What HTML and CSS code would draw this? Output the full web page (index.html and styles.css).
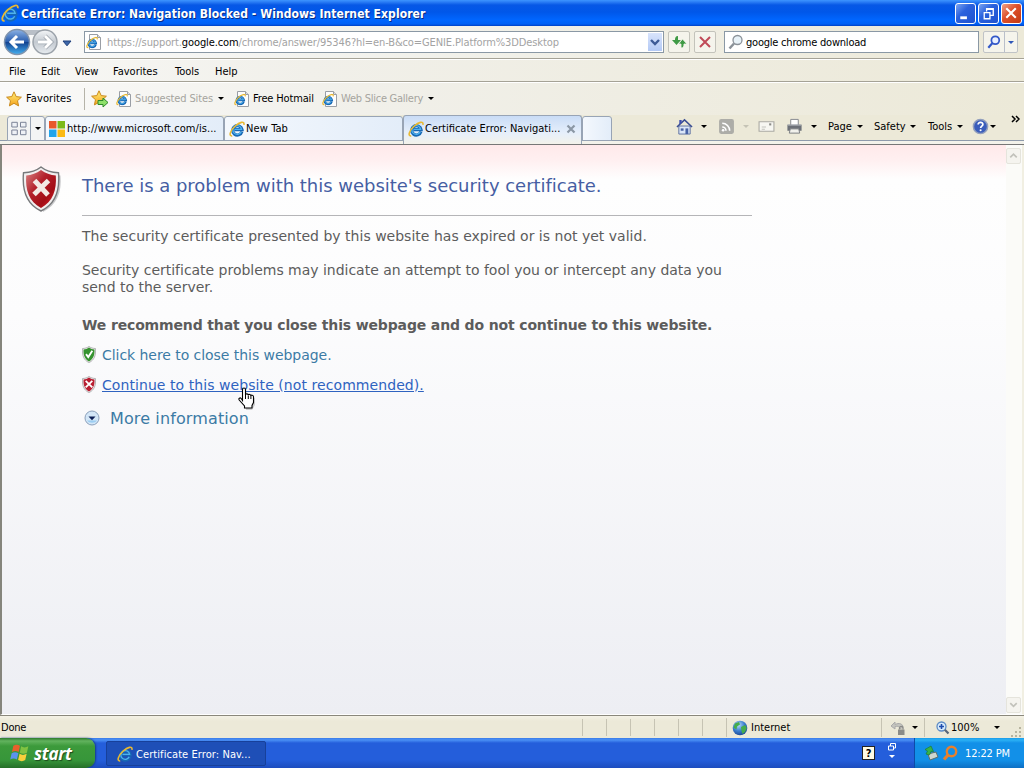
FILE: index.html
```html
<!DOCTYPE html>
<html lang="en">
<head>
    <meta charset="UTF-8">
    <meta name="viewport" content="width=device-width, initial-scale=1.0">
    <title>Certificate Error: Navigation Blocked</title>
    <link rel="stylesheet" href="styles.css">
</head>
<body>
    <!-- shared icons -->
    <svg class="defs" width="0" height="0">
        <defs>
            <linearGradient id="gBlue" x1="0" y1="0" x2="0" y2="1">
                <stop offset="0" stop-color="#8db3e6"/><stop offset=".48" stop-color="#2c5fae"/><stop offset=".5" stop-color="#123f8d"/><stop offset="1" stop-color="#45b1f2"/>
            </linearGradient>
            <linearGradient id="gGray" x1="0" y1="0" x2="0" y2="1">
                <stop offset="0" stop-color="#f4f6f8"/><stop offset=".5" stop-color="#c3c9d0"/><stop offset="1" stop-color="#e8ecf0"/>
            </linearGradient>
            <linearGradient id="gRed" x1="0" y1="0" x2="1" y2="1">
                <stop offset="0" stop-color="#d98484"/><stop offset=".4" stop-color="#b3202a"/><stop offset=".7" stop-color="#a30d15"/><stop offset="1" stop-color="#e0202a"/>
            </linearGradient>
            <linearGradient id="gStar" x1="0" y1="0" x2="0" y2="1">
                <stop offset="0" stop-color="#fff07a"/><stop offset="1" stop-color="#f5a21c"/>
            </linearGradient>
            <radialGradient id="gGlobe" cx=".4" cy=".3" r=".8">
                <stop offset="0" stop-color="#b5dcf8"/><stop offset=".5" stop-color="#3c7fd0"/><stop offset="1" stop-color="#123a86"/>
            </radialGradient>
        </defs>
        <symbol id="ie" viewBox="0 0 16 16">
            <path d="M12.900 10.600A4.700 4.700 0 1 1 13 8.600H5.500" fill="none" stroke="#1768b5" stroke-width="3.200"/>
            <path d="M12.200 10.900A4.400 4.400 0 1 1 12.600 8.300H5.500" fill="none" stroke="#4fb2ee" stroke-width="1.300"/>
            <path d="M3.200 14.900C-.5 15.500 1 9.500 6.200 5C10.300 1.300 15.800-.5 14.900 3.800" fill="none" stroke="#e9b932" stroke-width="1.600"/>
        </symbol>
        <symbol id="page" viewBox="0 0 16 16">
            <path d="M3.500.5h8l3 3v12h-11z" fill="#fdfdfd" stroke="#9a9ea5"/>
            <path d="M11.500.5v3h3" fill="#ddd" stroke="#9a9ea5"/>
            <use href="#ie" x="0" y="2.500" width="12" height="12"/>
        </symbol>
        <symbol id="star" viewBox="0 0 16 16">
            <path d="M8 .8l2.200 4.800 5.200.6-3.900 3.500 1.100 5.200L8 12.300l-4.600 2.600 1.100-5.200L.6 6.200l5.200-.6z" fill="url(#gStar)" stroke="#c98a1e"/>
        </symbol>
        <symbol id="shield" viewBox="0 0 38 46">
            <path d="M19 1C14 5 8 6.500 1.500 6.800 0 24 4 38 19 45 34 38 38 24 36.500 6.800 30 6.500 24 5 19 1z" fill="#f1eeee" stroke="#77797b" stroke-width="1.400"/>
            <path d="M19 4C14.500 7.300 9.500 9 4.200 9.500 3.200 24 7 35.500 19 42 31 35.500 34.800 24 33.800 9.500 28.500 9 23.500 7.300 19 4z"/>
        </symbol>
        <symbol id="lens" viewBox="0 0 16 16">
            <circle cx="9.500" cy="6" r="4.500"/>
            <path d="M6 9.500L1.500 14.500" stroke-width="2.500"/>
        </symbol>
    </svg>

    <div class="window">
        <div class="titlebar">
            <svg class="i18"><use href="#ie"/></svg>
            <span class="title">Certificate Error: Navigation Blocked - Windows Internet Explorer</span>
            <div class="wbtn"><svg viewBox="0 0 20 20"><path d="M4.500 14.500h7" stroke="#fff" stroke-width="3"/></svg></div>
            <div class="wbtn"><svg viewBox="0 0 20 20" fill="none" stroke="#fff"><path d="M8 8V5h7v7h-3M8 5.500h7M5 9h7M5.500 9v6.500h6V9z" stroke-width="1.400"/></svg></div>
            <div class="wbtn close"><svg viewBox="0 0 20 20"><path d="M4.500 4.500l10 10M14.500 4.500l-10 10" stroke="#fff" stroke-width="2.200"/></svg></div>
        </div>

        <div class="navbar">
            <svg class="travel" viewBox="0 0 56 30">
                <path d="M14 3h28v5H14z" fill="#b9bfc7"/>
                <circle cx="42" cy="15" r="12" fill="url(#gGray)" stroke="#9ba2aa" stroke-width="1.500"/>
                <circle cx="14" cy="15" r="12.500" fill="url(#gBlue)" stroke="#7f93ad" stroke-width="1.500"/>
                <path d="M21 15H8.500M14 9l-6 6 6 6" fill="none" stroke="#fff" stroke-width="3"/>
                <path d="M35 15h12.500M42 9l6 6-6 6" fill="none" stroke="#a3aab2" stroke-width="4.500"/>
                <path d="M35 15h12.500M42 9l6 6-6 6" fill="none" stroke="#fff" stroke-width="2.800"/>
            </svg>
            <svg class="recent" viewBox="0 0 10 7"><path d="M1 1h8L5 5.800z" fill="#3c66a8" stroke="#1d3f7c"/></svg>
            <div class="address">
                <svg class="i16"><use href="#page"/></svg>
                <span class="url">https://support.<b>google.com</b>/chrome/answer/95346?hl=en-B&amp;co=GENIE.Platform%3DDesktop</span>
                <div class="drop"><svg viewBox="0 0 14 18"><path d="M3 7l4 4 4-4" fill="none" stroke="#3d5a96" stroke-width="2.400"/></svg></div>
            </div>
            <div class="nbtn"><svg viewBox="0 0 20 20"><path d="M9 4C6.500 4 6 6 6 8H3l4.500 5L12 8H9z" fill="#3f9a45"/><path d="M12 16c2.500 0 3-2 3-4h3l-4.500-5L9.500 12H12z" fill="#3f9a45" stroke="#f5f4ec" stroke-width=".8"/></svg></div>
            <div class="nbtn"><svg viewBox="0 0 20 20" stroke="#c04a58" stroke-width="2"><path d="M5 5l10 10M15 5L5 15"/></svg></div>
            <div class="search">
                <svg class="i16" fill="#e8f2f8" stroke="#8b9299" stroke-width="1.300"><use href="#lens"/></svg>
                <span>google chrome download</span>
            </div>
            <div class="go">
                <svg class="i14" fill="#e9f0ff" stroke="#3358c8" stroke-width="2"><use href="#lens"/></svg>
                <i class="split"></i>
                <i class="arrow blue"></i>
            </div>
        </div>

        <div class="menubar">
            <span>File</span><span>Edit</span><span>View</span><span>Favorites</span><span>Tools</span><span>Help</span>
        </div>

        <div class="favbar">
            <svg class="i16"><use href="#star"/></svg>
            <span class="f1">Favorites</span>
            <i class="sep"></i>
            <svg class="i18" viewBox="0 0 18 18"><use href="#star" width="16" height="16"/><path d="M7 10.500h5V8l5 4.500-5 4.500v-2.500H7z" fill="#8ee06a" stroke="#2f8a2a"/></svg>
            <svg class="i16"><use href="#page"/></svg>
            <span class="dim f2">Suggested Sites</span>
            <i class="arrow"></i>
            <svg class="i16"><use href="#page"/></svg>
            <span class="f3">Free Hotmail</span>
            <svg class="i16"><use href="#page"/></svg>
            <span class="dim f4">Web Slice Gallery</span>
            <i class="arrow"></i>
        </div>

        <div class="tabrow">
            <div class="quick">
                <svg viewBox="0 0 16 14" fill="#eef1f6" stroke="#7c8498"><path d="M.8.800h5.500v4.700H.8zM9.500.800H15v4.700H9.500zM.8 8.500h5.500v4.700H.8zM9.500 8.500H15v4.700H9.500z"/></svg>
                <i class="split"></i>
                <i class="arrow"></i>
            </div>
            <div class="tab first">
                <svg class="i16" viewBox="0 0 16 16"><path d="M0 0h7.500v7.500H0z" fill="#e8582b"/><path d="M8.500 0H16v7.500H8.500z" fill="#7cba19"/><path d="M0 8.500h7.500V16H0z" fill="#22a4ea"/><path d="M8.500 8.500H16V16H8.500z" fill="#fbba15"/></svg>
                <span class="t1">http://www.microsoft.com/is...</span>
            </div>
            <div class="tab">
                <svg class="i16"><use href="#ie"/></svg>
                <span class="t2">New Tab</span>
            </div>
            <div class="tab active">
                <svg class="i16"><use href="#ie"/></svg>
                <span class="t3">Certificate Error: Navigati...</span>
                <svg class="tabx" viewBox="0 0 10 10"><path d="M1.500 1.500l7 7M8.500 1.500l-7 7" stroke="#8b97a5" stroke-width="2.200"/></svg>
            </div>
            <div class="tab new"></div>
            <div class="commands">
                <svg viewBox="0 0 18 18"><path d="M3 8.500h12V17H3z" fill="#dbe6f8" stroke="#5b6f9e"/><path d="M1 9.500L9 2l8 7.500" fill="none" stroke="#3a4d92" stroke-width="1.600"/><path d="M3.500 2H6v3l-2.500 2z" fill="#3d4fb0"/><path d="M10 11h3v6h-3z" fill="#4862a5"/><path d="M5 11h3v2.500H5z" fill="#4862a5"/></svg>
                <i class="arrow"></i>
                <svg class="rss" viewBox="0 0 16 16"><rect x="1" y="1" width="14" height="14" rx="2" fill="#adada8"/><path d="M4 5a7 7 0 0 1 7 7M4 8.500A3.500 3.500 0 0 1 7.500 12" fill="none" stroke="#fff" stroke-width="1.500"/><circle cx="4.800" cy="11.500" r="1.200" fill="#fff"/></svg>
                <i class="arrow pale"></i>
                <svg class="mail" viewBox="0 0 16 16"><path d="M1 3.500h14v9H1z" fill="#f7f7f2" stroke="#aaa9a2"/><path d="M3.500 8.500h4M3.500 10.500h3" stroke="#c4c4bd"/><path d="M10.500 5h2v2h-2z" fill="#8c8c88"/></svg>
                <svg viewBox="0 0 18 18"><path d="M5 1.500h8V8H5z" fill="#fff" stroke="#83868c"/><path d="M1.500 7h15v6.500h-15z" fill="#6c7078"/><path d="M2 7.500h14" stroke="#b7bbc2"/><path d="M4.500 11.500h9l1 4.500h-11z" fill="#f1f1ec" stroke="#777a80"/></svg>
                <i class="arrow"></i>
                <span>Page</span><i class="arrow"></i>
                <span>Safety</span><i class="arrow"></i>
                <span>Tools</span><i class="arrow"></i>
                <svg viewBox="0 0 18 18"><circle cx="9" cy="9" r="7.500" fill="#3a5dbb" stroke="#929fbd" stroke-width="1.600"/><path d="M6.500 7c0-3.300 5.200-3 5 0-.1 1.600-2.400 1.600-2.400 3.600" fill="none" stroke="#fff" stroke-width="1.800"/><circle cx="9.100" cy="13" r="1.100" fill="#fff"/></svg>
                <i class="arrow"></i>
                <svg class="more" viewBox="0 0 9 8"><path d="M1 1l3 3-3 3M5 1l3 3-3 3" fill="none" stroke="#000" stroke-width="1.500"/></svg>
            </div>
        </div>

        <div class="view">
            <div class="page">
                <svg class="bigshield" viewBox="0 0 40 47"><path d="M21 4c6 4 12 5 17.500 5.500C40 26 35 39 21 46z" fill="#c9c9cb"/><g fill="url(#gRed)"><use href="#shield" width="38" height="46"/></g><path d="M12.500 14.500l13.500 14.500M26.500 14.500L12 28.500" stroke="#f3e9e4" stroke-width="5"/></svg>
                <div class="message">
                    <h1>There is a problem with this website's security certificate.</h1>
                    <p class="p1">The security certificate presented by this website has expired or is not yet valid.</p>
                    <p class="p2">Security certificate problems may indicate an attempt to fool you or intercept any data you<br>send to the server.</p>
                    <p class="advice">We recommend that you close this webpage and do not continue to this website.</p>
                    <div class="option">
                        <svg viewBox="0 0 38 46"><g fill="#35922f"><use href="#shield"/></g><path d="M11 22l6 8 11-17" fill="none" stroke="#fff" stroke-width="5"/></svg>
                        <a class="a1">Click here to close this webpage.</a>
                    </div>
                    <div class="option">
                        <svg viewBox="0 0 38 46"><g fill="#b81e31"><use href="#shield"/></g><path d="M10 13l18 18M28 13L10 31" stroke="#fff" stroke-width="5"/></svg>
                        <a class="a2 hover">Continue to this website (not recommended).</a>
                        <svg class="cursor" viewBox="0 0 18 24">
                            <path d="M7 3l3 5 7 3v7l-3 5H8z" fill="#999" opacity=".45"/>
                            <path d="M4.500 13.500V2.500c0-2 3-2 3 0V8c0-1.500 2.800-1.500 2.800.3 0-1.300 2.600-1.200 2.600.6 0-1.200 2.600-1 2.600.8v5.800l-1.500 3v2.500H6.500v-2L1.200 13c-1-1.700.9-2.700 2-1.500z" fill="#fff" stroke="#000" stroke-width="1.100"/>
                            <path d="M7.500 8v4M10.300 8.500V12M12.900 9v3" stroke="#000"/>
                        </svg>
                    </div>
                    <div class="info">
                        <svg viewBox="0 0 16 16"><circle cx="8" cy="8" r="7" fill="#d3e6f7" stroke="#8ba0bb"/><path d="M3 10.500a5.500 4 0 0 0 10 0z" fill="#9ccdf2"/><path d="M4.500 6.500h7L8 10.200z" fill="#0c1e55"/></svg>
                        <a>More information</a>
                    </div>
                </div>
            </div>
            <div class="scrollbar">
                <div class="sbtn"><svg viewBox="0 0 14 14"><path d="M3.500 9L7 5.500 10.500 9" fill="none" stroke="#c2c2bb" stroke-width="1.800"/></svg></div>
                <div class="sbtn"><svg viewBox="0 0 14 14"><path d="M3.500 5.500L7 9l3.500-3.500" fill="none" stroke="#c2c2bb" stroke-width="1.800"/></svg></div>
            </div>
        </div>

        <div class="status">
            <span class="done">Done</span>
            <i></i><i></i><i></i><i></i><i></i><i></i>
            <div class="zone">
                <svg viewBox="0 0 16 16"><circle cx="8" cy="8" r="7.300" fill="url(#gGlobe)"/><path d="M3 3.500l4-1.500 1 2.500-3 2-.5 3-3-2zM9 7l4-2 1.800 3L13 12l-2.500 2-1-3z" fill="#45ad4b"/></svg>
                <span>Internet</span>
            </div>
            <div class="protect">
                <svg viewBox="0 0 18 18"><path d="M2 7l4-4v2.500c4-2 8-1 8 3l-3 1C10 7 9 7 6 7.500V10z" fill="#c4c4be" stroke="#aaa"/><path d="M9 10.500h6.500V16H9z" fill="#8b8b88"/><path d="M10.500 10.500V8.800c0-2 3.500-2 3.500 0v1.700" fill="none" stroke="#8b8b88" stroke-width="1.300"/></svg>
                <i class="arrow"></i>
            </div>
            <div class="zoom">
                <svg viewBox="0 0 14 14"><circle cx="5.500" cy="5.500" r="4.500" fill="#d8ebfb" stroke="#5c8bc5" stroke-width="1.300"/><path d="M3 5.500h5M5.500 3v5" stroke="#1f4dae" stroke-width="1.600"/><path d="M8.800 8.800L12.500 12.500" stroke="#596679" stroke-width="2.200"/></svg>
                <span>100%</span>
                <i class="arrow"></i>
                <svg class="grip" viewBox="0 0 12 12" fill="#b7b49f"><path d="M9 1h2v2H9zM5 5h2v2H5zM9 5h2v2H9zM1 9h2v2H1zM5 9h2v2H5zM9 9h2v2H9z"/></svg>
            </div>
        </div>
    </div>

    <div class="taskbar">
        <div class="start">
            <svg viewBox="0 0 18 18"><path d="M3 2.500q3-2 6 0L7.800 8.200q-3-1.800-6 0z" fill="#e8602c"/><path d="M10 3q3 2 6.500 0l-1.300 5.700q-3 2-6.400 0z" fill="#80c242"/><path d="M1.500 9.200q3-1.800 6 0l-1.300 5.700q-3-1.900-6 0z" fill="#5b93ee"/><path d="M8.600 9.700q3 2 6.400 0l-1.300 5.700q-3 2-6.400 0z" fill="#f8cf3c"/></svg>
            <span>start</span>
        </div>
        <div class="task">
            <svg class="i16"><use href="#ie"/></svg>
            <span>Certificate Error: Nav...</span>
        </div>
        <div class="lang">
            <b>?</b>
            <svg viewBox="0 0 12 18"><path d="M4.500 4V1.500h5V6H7M2.500 4h5v4h-5z" fill="none" stroke="#fff"/><path d="M3 13h6l-3 3z" fill="#fff"/></svg>
        </div>
        <div class="tray">
            <svg viewBox="0 0 16 16"><path d="M5 9l8-2 2 5-8 3z" fill="#cfd6cf" stroke="#5f6f6a"/><path d="M3 9l1.500-3L2 4.500 8 1l2.500 5.500L8 6.300 6.500 10z" fill="#37b24a" stroke="#1b7c35" stroke-width=".7"/></svg>
            <svg viewBox="0 0 16 16"><circle cx="9.500" cy="6.500" r="4.700" fill="none" stroke="#e9802c" stroke-width="2.400"/><path d="M6 10l-4 4.500" stroke="#e9802c" stroke-width="3.200"/></svg>
            <span>12:22 PM</span>
        </div>
    </div>
</body>
</html>
```
FILE: styles.css
```css
* {
    box-sizing: border-box;
}
body {
    margin: 0;
    width: 1024px;
    height: 768px;
    overflow: hidden;
    display: flex;
    flex-direction: column;
    font-family: "DejaVu Sans Condensed", "DejaVu Sans", sans-serif;
    font-stretch: condensed;
    font-size: 11px;
    color: #000;
    white-space: nowrap;
}
svg {
    display: block;
    flex: none;
}
span, i {
    flex: none;
}
.defs {
    position: absolute;
}
.i14 { width: 14px; height: 14px; }
.i16 { width: 16px; height: 16px; }
.i18 { width: 18px; height: 18px; }
.arrow {
    border: 3px solid transparent;
    border-top-color: #000;
    border-bottom: 0;
    width: 6px;
}
.arrow.blue { border-top-color: #2f56b8; }
.arrow.pale { border-top-color: #c5c3b5; }

.window {
    height: 738px;
    display: flex;
    flex-direction: column;
    background: #ece9d8;
}

/* title bar */
.titlebar {
    height: 26px;
    display: flex;
    align-items: center;
    padding: 0 2px 0 1px;
    gap: 3px;
    background: linear-gradient(#3d95ff 0, #2a7df5 2px, #0758e6 5px, #0057e9 12px, #0066ff 20px, #0060f5 24px, #0040c4);
}
.title {
    flex: 1;
    margin: 1px 0 0 -1px;
    color: #fff;
    font-size: 12px;
    font-weight: bold;
    letter-spacing: 0.08px;
    text-shadow: 1px 1px #0a2d83;
}
.wbtn {
    width: 21px;
    height: 21px;
    border: 1px solid #fff;
    border-radius: 3px;
    background: linear-gradient(135deg, #7ba4f2, #2b62dd 40%, #1f52cf);
    margin-right: -1px;
}
.wbtn.close {
    background: linear-gradient(135deg, #f0a288, #dd4f2a 45%, #c23a14);
    margin-right: 0;
}

/* address row */
.navbar {
    height: 33px;
    display: flex;
    align-items: center;
    padding-left: 3px;
    border-bottom: 1px solid #a5a296;
    background: linear-gradient(90deg, #fafafa, #f3f3ef 30%, #ece9d8);
}
.travel { width: 56px; height: 30px; }
.recent { width: 10px; height: 7px; margin: 2px 0 0 3px; }
.address {
    width: 580px;
    height: 22px;
    margin-left: 12px;
    padding-left: 1px;
    display: flex;
    align-items: center;
    border: 1px solid #8a98a5;
    background: #fff;
}
.url {
    flex: 1;
    margin: 1px 0 0 5px;
    color: #a3a3a3;
    letter-spacing: -0.11px;
}
.url b {
    font-weight: normal;
    color: #000;
}
.drop {
    width: 14px;
    height: 18px;
    margin-right: 1px;
    background: linear-gradient(#d8e4fc, #b3c9f5);
}
.nbtn {
    width: 22px;
    height: 22px;
    margin-left: 4px;
    border: 1px solid #c3c3bb;
    border-radius: 2px;
    background: #f5f4ec;
}
.search {
    width: 255px;
    height: 22px;
    margin-left: 8px;
    padding-left: 3px;
    gap: 2px;
    display: flex;
    align-items: center;
    border: 1px solid #8a98a5;
    background: #fff;
}
.search span {
    margin-top: 1px;
    letter-spacing: -0.22px;
}
.go {
    width: 35px;
    height: 22px;
    margin-left: 4px;
    padding-left: 3px;
    display: flex;
    align-items: center;
    border: 1px solid #c0c3c6;
    border-radius: 2px;
    background: #f5f4ec;
}
.split {
    width: 1px;
    height: 100%;
    margin: 0 4px 0 3px;
    background: #b9bfca;
}
.go .split { margin-right: 3px; }

/* menu */
.menubar {
    height: 23px;
    display: grid;
    grid-template-columns: 32px 34px 38px 62px 40px 40px;
    align-items: center;
    padding: 2px 0 0 9px;
    border-top: 1px solid #fff;
    border-bottom: 1px solid #a5a296;
    background: linear-gradient(90deg, #f8f8f6, #f1f0ea 30%, #ece9d8);
}

/* favorites bar */
.favbar {
    height: 33px;
    display: grid;
    grid-template-columns: 20px 58px 7px 25px 19px 83px 16px 19px 69px 19px 87px 10px;
    align-items: center;
    padding: 0 0 1px 6px;
    border-top: 1px solid #fff;
    background: linear-gradient(90deg, #fafaf9, #f1f0ea 35%, #ece9d8);
}
.sep {
    width: 1px;
    height: 22px;
    background: #b5b3a8;
}
.dim { color: #a5a49e; }
.f1 { letter-spacing: 0.1px; margin-top: -1px; }
.f2 { letter-spacing: -0.13px; }
.f3 { letter-spacing: -0.15px; }
.f4 { letter-spacing: -0.25px; }

/* tabs */
.tabrow {
    height: 30px;
    display: flex;
    align-items: flex-start;
    padding-left: 7px;
    background: linear-gradient(#ece9d8 25px, #8e9aab 25px, #8e9aab 26px, #f3f2ea 26px, #f3f2ea 29px, #777 29px);
}
.quick, .tab {
    height: 25px;
    margin-top: 1px;
    display: flex;
    align-items: center;
    border: 1px solid #98a4b5;
    border-radius: 3px 3px 0 0;
}
.quick {
    width: 38px;
    padding-left: 3px;
    background: #f3f4f4;
}
.quick svg { width: 16px; height: 15px; }
.quick .split { background: #98a4b5; }
.tab {
    width: 179px;
    padding-left: 4px;
    background: linear-gradient(90deg, #f4f8fd, #e3edf9);
}
.tab.first { padding-left: 3px; }
.tab span { margin-left: 1px; }
.tab .t1 { letter-spacing: 0.06px; margin-left: 2px; }
.tab .t2 { letter-spacing: 0.1px; }
.tab.active {
    height: 29px;
    margin-top: 0;
    padding-bottom: 3px;
    border-bottom: 0;
    background: linear-gradient(#c9dcf6, #e6effb 60%, #f3f2ea);
}
.tabx { width: 10px; height: 10px; margin-left: 6px; }
.tab.new { width: 30px; }
.commands {
    height: 22px;
    margin: 0 0 0 64px;
    display: grid;
    grid-template-columns: 25px 18px 24px 16px 27px 25px 17px 29px 17px 36px 18px 29px 15px 18px 21px 12px;
    align-items: center;
}
.commands svg { width: 17px; height: 17px; }
.commands .rss, .commands .mail { margin-left: -1px; }
.commands .more {
    width: 9px;
    height: 8px;
    margin-top: -14px;
}

/* page */
.view {
    height: 570px;
    display: flex;
    border-left: 2px solid #85857c;
    border-right: 2px solid #f1efe2;
    border-bottom: 1px solid #fff;
}
.page {
    flex: 1;
    display: flex;
    padding: 21px 0 0 20px;
    background: linear-gradient(#ffe9ea 0, #fff0f1 16px, #fefefe 34px, #fcfcfd 170px, #edeef3 100%);
}
.bigshield { width: 40px; height: 47px; }
.message {
    width: 672px;
    margin-left: 20px;
    font-family: "DejaVu Sans", sans-serif;
    font-stretch: normal;
    font-size: 14px;
    line-height: 17px;
    color: #5c5c5c;
}
.message h1 {
    width: 670px;
    height: 50px;
    margin: 0;
    padding-top: 9px;
    border-bottom: 1px solid #b5b5b8;
    font-size: 18px;
    font-weight: normal;
    line-height: 22px;
    letter-spacing: -0.02px;
    color: #465ea3;
}
.message p { margin: 0; }
.message .p1 { padding-top: 12px; letter-spacing: 0.01px; }
.message .p2 { padding-top: 17px; letter-spacing: -0.02px; }
.message .advice {
    padding-top: 21px;
    font-weight: bold;
    letter-spacing: -0.145px;
}
.option {
    position: relative;
    height: 30px;
    display: flex;
    align-items: center;
    gap: 6px;
}
.advice + .option { margin-top: 6px; }
.option svg { width: 14px; height: 17px; margin-top: -2px; }
.option a, .info a { color: #3c7ba5; }
.option .a1 { letter-spacing: -0.05px; }
.option .a2 { letter-spacing: 0.07px; }
.option a.hover {
    color: #2f63c0;
    text-decoration: underline;
}
.option .cursor {
    position: absolute;
    left: 156px;
    top: 19px;
    width: 18px;
    height: 24px;
}
.info {
    height: 36px;
    display: flex;
    align-items: center;
    gap: 10px;
    padding-left: 2px;
    font-size: 16px;
    letter-spacing: 0.12px;
}
.info svg { width: 16px; height: 16px; }
.scrollbar {
    width: 16px;
    display: flex;
    flex-direction: column;
    justify-content: space-between;
    padding: 3px 0 1px;
    background: #fbfbf8;
}
.sbtn {
    width: 15px;
    height: 16px;
    border: 1px solid #e5e4dc;
    border-radius: 2px;
    background: #f5f4ef;
}

/* status bar */
.status {
    height: 23px;
    display: flex;
    align-items: center;
    padding-top: 1px;
    border-top: 1px solid #8a887c;
    background: linear-gradient(#f4f2e6, #ece9d8 5px);
}
.status > i {
    width: 24px;
    height: 17px;
    border-left: 1px solid #c6c3b3;
}
.done {
    width: 582px;
    padding-left: 1px;
    letter-spacing: -0.2px;
}
.zone, .protect, .zoom {
    height: 19px;
    display: flex;
    align-items: center;
    border-left: 1px solid #c6c3b3;
}
.zone { width: 155px; padding-left: 5px; gap: 3px; }
.zone svg { width: 16px; height: 16px; }
.protect { width: 43px; padding-left: 7px; gap: 5px; }
.protect svg { width: 18px; height: 18px; }
.zoom { width: 100px; padding-left: 11px; }
.zoom svg { width: 14px; height: 14px; }
.zoom span { margin-left: 1px; }
.zoom .arrow { margin-left: 15px; }
.zoom .grip { width: 12px; height: 12px; margin: 8px 0 0 10px; }

/* taskbar */
.taskbar {
    height: 30px;
    display: flex;
    background: linear-gradient(#3a7be8 0, #4a90f5 2px, #245edb 5px, #245edb 22px, #1c4cbe);
    color: #fff;
}
.start {
    width: 95px;
    display: flex;
    align-items: center;
    gap: 4px;
    padding-left: 10px;
    border-radius: 0 9px 9px 0;
    background: linear-gradient(#2c7a2c 0, #62b35e 3px, #3c9a3b 8px, #37963a 22px, #256f28);
    box-shadow: 1px 0 2px #153b8b;
}
.start svg { width: 20px; height: 20px; }
.start span {
    font-family: "Open Sans", sans-serif;
    font-stretch: normal;
    font-size: 17px;
    font-weight: bold;
    font-style: italic;
    letter-spacing: -0.3px;
    text-shadow: 1px 1px 1px #1c4a1c;
}
.task {
    width: 160px;
    height: 25px;
    margin: 3px 0 0 11px;
    padding-left: 10px;
    gap: 3px;
    display: flex;
    align-items: center;
    border: 1px solid #17409a;
    border-radius: 2px;
    background: #1e4fb7;
}
.task span { letter-spacing: 0.08px; margin-top: 1px; }
.lang {
    display: flex;
    align-items: center;
    gap: 11px;
    margin-left: auto;
    padding-right: 16px;
}
.lang b {
    width: 13px;
    height: 14px;
    line-height: 13px;
    text-align: center;
    border: 1px solid #222;
    background: #fffbe6;
    color: #000;
}
.lang svg { width: 12px; height: 18px; margin-top: -4px; }
.tray {
    width: 110px;
    display: flex;
    align-items: center;
    gap: 3px;
    padding-left: 8px;
    border-left: 1px solid #0d4ba8;
    background: linear-gradient(#1a9be8 0, #2bb1f5 2px, #1290e8 5px, #1290e8 22px, #0d6fc4);
}
.tray svg { width: 16px; height: 16px; }
.tray span {
    margin-left: 4px;
    letter-spacing: -0.15px;
}
```
